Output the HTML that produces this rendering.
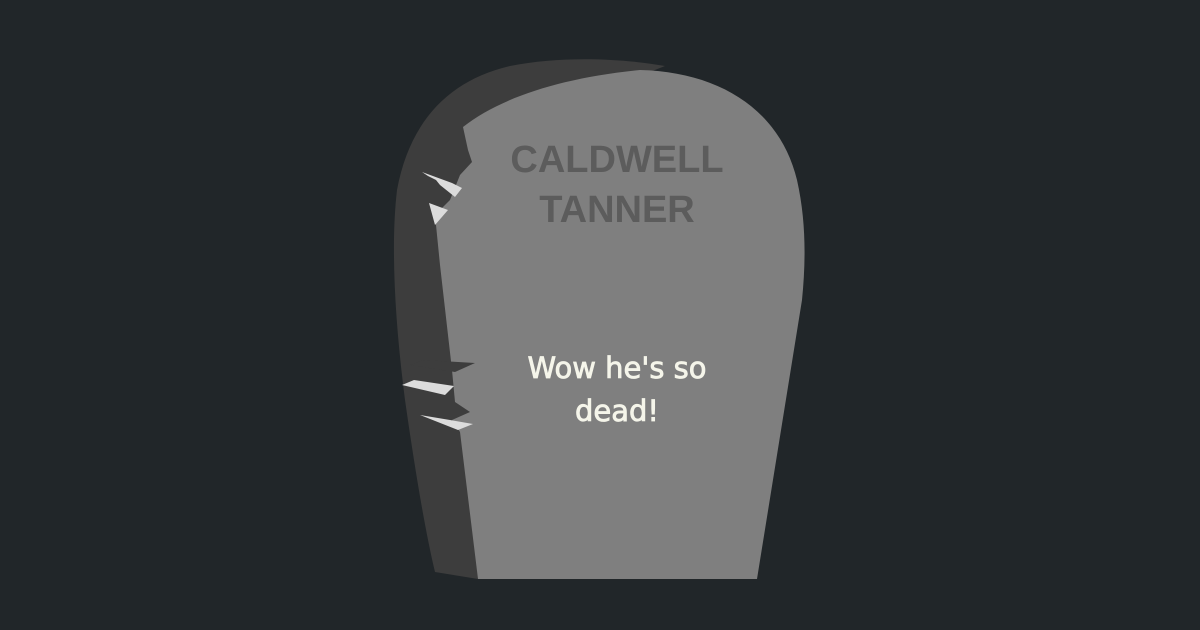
<!DOCTYPE html>
<html><head><meta charset="utf-8"><style>
html,body{margin:0;padding:0;background:#212629;width:1200px;height:630px;overflow:hidden}
svg{display:block}
</style></head><body>
<svg width="1200" height="630" viewBox="0 0 1200 630" xmlns="http://www.w3.org/2000/svg">
<rect width="1200" height="630" fill="#212629"/>
<path d="M435,572 L478,579 L478,140 L665,66 C620,58 560,56 510,66 C450,80 410,120 397,190 C390,250 396,330 405,400 C415,470 425,530 435,572 Z" fill="#3d3d3d"/>
<path d="M463,127 C500,98 560,78 640,70 C720,72 780,110 797,180 C806,220 806,260 802,300 L757,579 L478,579 L460,432 L452,420 L470,412 L455,402 L452,370 L440,265 L435,215 L450,200 L460,175 L472,162 L468,150 Z" fill="#7f7f7f"/>
<path d="M422,172 L452,183 L462,188 L455,197 L440,185 L436,180 L428,176 Z" fill="#dcdcdc"/>
<path d="M429,203 L448,210 L435,225 Z" fill="#dcdcdc"/>
<path d="M402,385 L414,380 L454,386 L445,395 Z" fill="#dcdcdc"/>
<path d="M420,415 L450,420 L473,424 L458,430 Z" fill="#dcdcdc"/>
<path d="M410,365 L424,360 L475,363 L455,372 Z" fill="#3d3d3d"/>
<text x="617" y="172" text-anchor="middle" font-family="'Liberation Sans',sans-serif" font-weight="bold" font-size="38" fill="#5c5c5c">CALDWELL</text>
<text x="617" y="222" text-anchor="middle" font-family="'Liberation Sans',sans-serif" font-weight="bold" font-size="38" fill="#5c5c5c">TANNER</text>
<text x="617" y="378" text-anchor="middle" font-family="'Comic Sans MS','DejaVu Sans',sans-serif" font-size="29" fill="#f5f5ea" stroke="#f5f5ea" stroke-width="0.8">Wow he's so</text>
<text x="617" y="421" text-anchor="middle" font-family="'Comic Sans MS','DejaVu Sans',sans-serif" font-size="29" fill="#f5f5ea" stroke="#f5f5ea" stroke-width="0.8">dead!</text>
</svg>
</body></html>
